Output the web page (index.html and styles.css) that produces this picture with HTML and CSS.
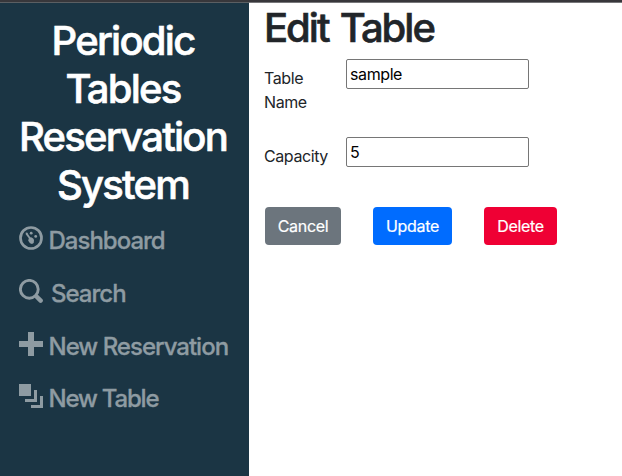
FILE: index.html
```html
<!DOCTYPE html>
<html lang="en">
<head>
<meta charset="utf-8">
<title>Periodic Tables</title>
<link rel="stylesheet" href="styles.css">
</head>
<body>
<div class="app">
  <aside class="sidebar">
    <h1 class="brand">Periodic Tables Reservation System</h1>
    <nav class="menu">
      <a class="item"><svg class="icon" viewBox="0 0 24 24"><circle cx="12" cy="12" r="10.5" fill="none" stroke="currentColor" stroke-width="2.7"/><circle cx="12.2" cy="7.2" r="1.4"/><circle cx="16.7" cy="10.4" r="1.4"/><path d="M6.8 6.6 8.5 6.8 9.3 8.6 11.2 11.3Q14.6 11.6 15 14.3L14.7 17 13 18.1 11 17.2 9.2 14.8 9.8 12.2 6.7 8.3Z"/></svg><span class="text">Dashboard</span></a>
      <a class="item"><svg class="icon" viewBox="0 0 24 24"><circle cx="10.3" cy="10.3" r="8.9" fill="none" stroke="currentColor" stroke-width="2.9"/><path d="M15.4 18.6 18.6 15.4 23.5 20.3Q24.5 21.6 23.4 23 21.8 24.7 20.3 23.5Z"/></svg><span class="text search">Search</span></a>
      <a class="item"><svg class="icon" viewBox="0 0 24 24"><path d="M9 0H15V9H24V15H15V24H9V15H0V9H9Z"/></svg><span class="text reservation">New Reservation</span></a>
      <a class="item"><svg class="icon" viewBox="0 0 24 24"><path d="M0 0H12V12H0ZM15 6H18V18H6V15H15ZM21 12H24V24H12V21H21Z"/></svg><span class="text table">New Table</span></a>
    </nav>
  </aside>
  <main class="content">
    <h1 class="title">Edit Table</h1>
    <form class="form">
      <div class="row first"><label class="label" for="name">Table Name</label><input class="input" id="name" value="sample"></div>
      <div class="row"><label class="label" for="capacity">Capacity</label><input class="input" id="capacity" value="5"></div>
      <div class="actions">
        <button type="button" class="btn cancel">Cancel</button>
        <button type="button" class="btn update">Update</button>
        <button type="button" class="btn delete">Delete</button>
      </div>
    </form>
  </main>
</div>
</body>
</html>
```
FILE: styles.css
```css
* { box-sizing: border-box; }
body {
  margin: 0;
  background: #fff;
  color: #212529;
  font: 400 16px/24px Inter, "Liberation Sans", sans-serif;
}
.app {
  display: flex;
  height: 476px;
  border-top: 2px solid #38373b;
  overflow: hidden;
}
.sidebar {
  width: 249px;
  flex: none;
  padding-top: 14px;
  border-top: 1px solid #5b5f63;
  background: #1b3544;
}
.brand {
  width: 216px;
  margin: 0 0 0 15px;
  color: #fff;
  font-size: 40px;
  font-weight: 500;
  line-height: 48px;
  letter-spacing: -1.75px;
  -webkit-text-stroke: 0.6px currentColor;
  text-align: center;
}
.menu {
  display: grid;
  grid-template-rows: 53px 53px 52px 52px;
  padding: 17px 0 0 19px;
  color: #8e9ba2;
}
.item { display: flex; white-space: nowrap; }
.icon { width: 24px; height: 24px; flex: none; fill: currentColor; }
.text {
  margin: -3px 0 0 5.5px;
  font-size: 24px;
  font-weight: 500;
  line-height: 36px;
  letter-spacing: -1px;
  -webkit-text-stroke: 0.3px currentColor;
}
.search { margin-left: 8px; }
.table { letter-spacing: -1.2px; }
.content {
  flex: 1;
  padding-left: 15px;
  border-top: 1px solid #77777a;
}
.title {
  margin: 1px 0 0;
  font-size: 40px;
  font-weight: 500;
  line-height: 48px;
  letter-spacing: -2px;
  word-spacing: 2.5px;
  -webkit-text-stroke: 0.6px currentColor;
}
.row { display: flex; height: 70px; }
.first { height: 78px; margin-top: 7px; }
.label { width: 50px; margin-right: 32px; padding-top: 7px; letter-spacing: -0.4px; }
.input {
  width: 183px;
  height: 30px;
  padding: 1px 3px;
  border: 1px solid #767676;
  border-radius: 2px;
  background: #fff;
  color: #000;
  font: inherit;
  letter-spacing: -0.4px;
}
.actions { display: flex; gap: 32px; padding-left: 1px; }
.btn {
  height: 38px;
  padding: 0;
  border: 0;
  border-radius: 4px;
  color: #fff;
  font: inherit;
  letter-spacing: -0.3px;
  -webkit-text-stroke: 0.2px currentColor;
}
.cancel { width: 76px; background: #6c757d; }
.update { width: 79px; background: #006cff; }
.delete { width: 73px; background: #ef0034; }
```
